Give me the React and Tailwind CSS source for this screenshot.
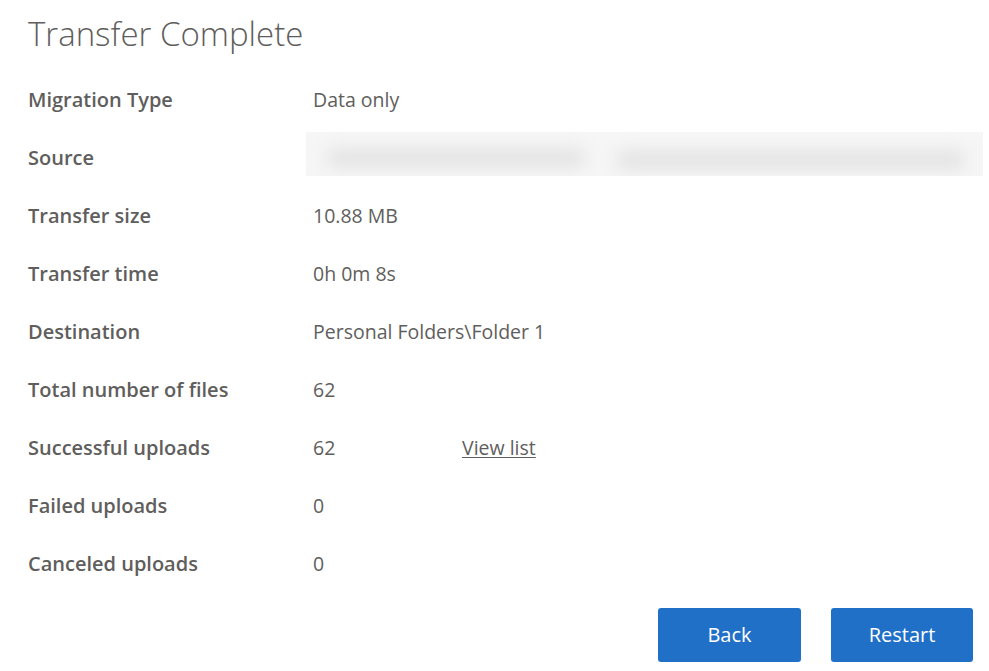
import React from "react";

const rows = [
  { label: "Migration Type", value: "Data only" },
  { label: "Source", blurred: true },
  { label: "Transfer size", value: "10.88 MB" },
  { label: "Transfer time", value: "0h 0m 8s" },
  { label: "Destination", value: "Personal Folders\\Folder 1" },
  { label: "Total number of files", value: "62" },
  { label: "Successful uploads", value: "62", link: "View list" },
  { label: "Failed uploads", value: "0" },
  { label: "Canceled uploads", value: "0" },
];

function BlurredSource() {
  return (
    <div className="relative -mt-[8px] h-[44px] w-[677px] -ml-[7px] overflow-hidden bg-[#f6f6f6]">
      <div className="absolute left-[20px] top-[16px] h-[20px] w-[260px] rounded-full bg-[#e4e4e4] blur-[8px]" />
      <div className="absolute left-[310px] top-[18px] h-[20px] w-[350px] rounded-full bg-[#e4e4e4] blur-[8px]" />
    </div>
  );
}

export default function App() {
  return (
    <div
      className="h-[671px] w-[989px] bg-white text-[#605e5c]"
      style={{ fontFamily: '"Open Sans", "Noto Sans", Arial, sans-serif' }}
    >
      <div className="pl-[28px] pt-[12px]">
        <h1 className="text-[33px] font-light leading-[44px] text-[#605e5c]">
          Transfer Complete
        </h1>
        <div className="mt-[15px] flex flex-col">
          {rows.map((r) => (
            <div key={r.label} className="flex h-[58px] items-center">
              <div className="w-[285px] text-[20px] font-semibold">{r.label}</div>
              {r.blurred ? (
                <BlurredSource />
              ) : (
                <div className="flex items-center whitespace-nowrap text-[19.5px]">
                  <span className="min-w-[149px]">{r.value}</span>
                  {r.link && (
                    <a href="#" className="underline underline-offset-2">
                      {r.link}
                    </a>
                  )}
                </div>
              )}
            </div>
          ))}
        </div>
        <div className="mt-[15px] flex justify-end gap-[30px] pr-[16px]">
          <button className="h-[54px] w-[143px] rounded-[3px] bg-[#2170c8] text-[20px] text-white">
            Back
          </button>
          <button className="h-[54px] w-[142px] rounded-[3px] bg-[#2170c8] text-[20px] text-white">
            Restart
          </button>
        </div>
      </div>
    </div>
  );
}
